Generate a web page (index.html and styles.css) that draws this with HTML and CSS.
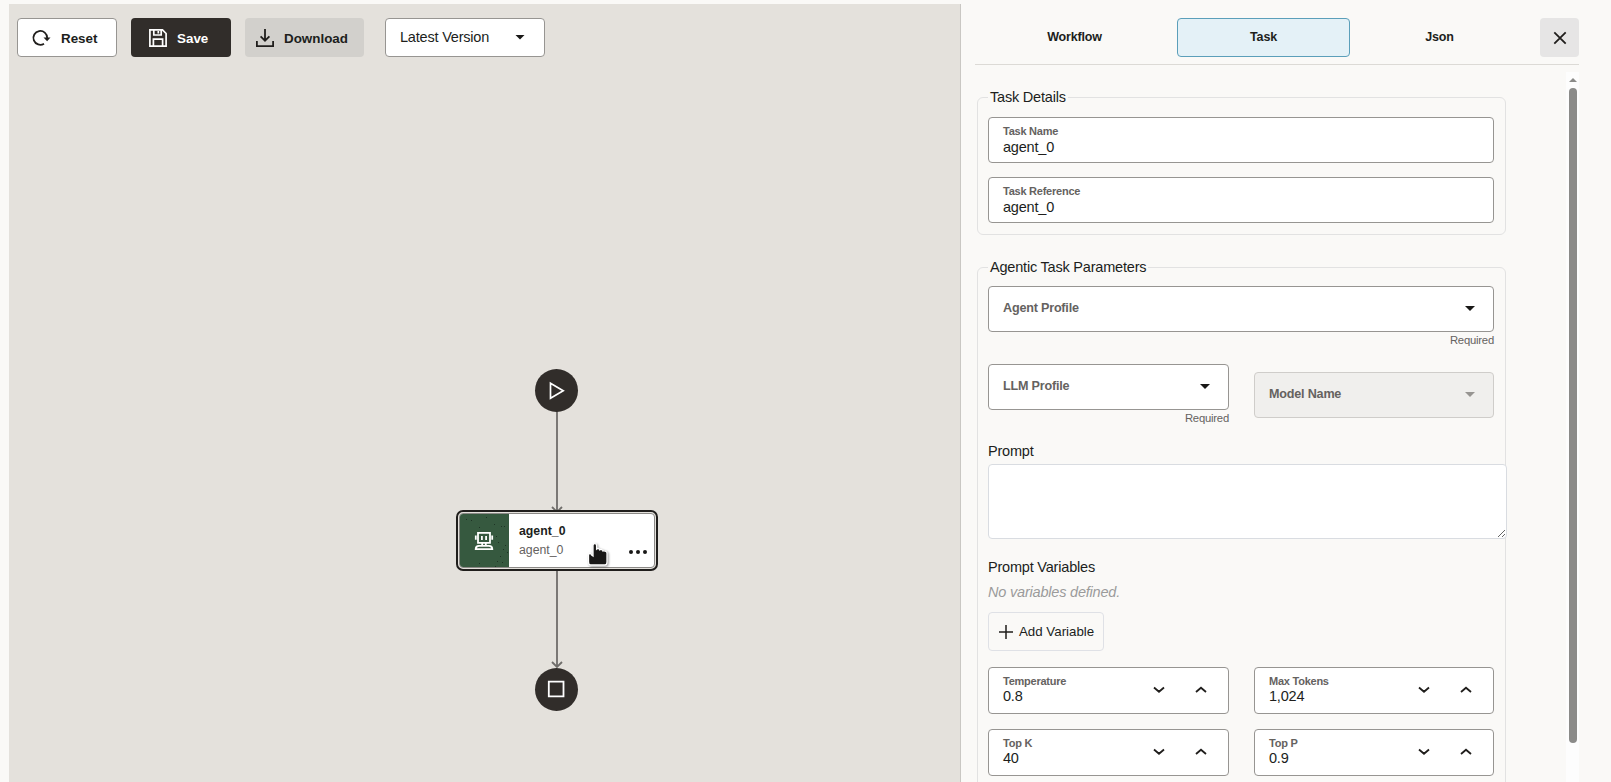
FILE: index.html
```html
<!DOCTYPE html>
<html lang="en">
<head>
    <meta charset="UTF-8">
    <meta name="viewport" content="width=device-width, initial-scale=1.0">
    <title>Workflow Editor</title>
    <link rel="stylesheet" href="styles.css">
</head>
<body>
    <div class="app">
        <main class="canvas">
            <div class="toolbar">
                <button class="btn btn-reset">
                    <svg width="20" height="20" viewBox="0 0 20 20" fill="none" stroke="#201e1c" stroke-width="1.8"><path d="M13 15.7A6.9 6.9 0 1 1 16.2 10"/><path d="M12.5 9.5h7L16.1 13.2z" fill="#201e1c" stroke="none"/></svg>
                    <b>Reset</b>
                </button>
                <button class="btn btn-save">
                    <svg width="20" height="20" viewBox="0 0 20 20" fill="none" stroke="#fff" stroke-width="1.7"><path d="M1.9 1.9h12.6l3.6 3.6v12.6H1.9z"/><path d="M5.4 18v-6.8h9.2V18M5.8 2v5h7.4V2M10.3 3v2.6"/></svg>
                    <b>Save</b>
                </button>
                <button class="btn btn-download">
                    <svg width="20" height="20" viewBox="0 0 20 20" fill="none" stroke="#201e1c" stroke-width="1.8"><path d="M10 1v11.5M5.6 8.3L10 12.7l4.4-4.4M1.9 13v5.1h16.2V13"/></svg>
                    <b>Download</b>
                </button>
                <div class="version-select">Latest Version <span class="caret"></span></div>
            </div>

            <svg class="edges" width="952" height="778" fill="none" stroke="#6f6d6a" stroke-width="1.8">
                <path d="M548 407V508M543 503l5 5 5-5"/>
                <path d="M548 564v99M543 658l5 5 5-5"/>
            </svg>
            <div class="terminal start">
                <svg width="42" height="42" viewBox="0 0 42 42" fill="none" stroke="#fff" stroke-width="1.7"><path d="M15.5 14.3v14.9L28.2 21.8z"/></svg>
            </div>
            <div class="node">
                <div class="node-body">
                    <div class="node-icon">
                        <svg class="grain" width="49" height="55" fill="#1e3325"><path d="M6 5h1v1H6zM26 3h1v1h-1zM34 10h1v1h-1zM41 12h1v1h-1zM44 12h1v1h-1zM38 28h1v1h-1zM43 35h1v1h-1zM40 42h1v1h-1zM37 47h1v1h-1zM47 38h1v1h-1zM35 52h1v1h-1zM42 48h1v1h-1zM19 49h1v1h-1zM19 13h1v1h-1zM11 6h1v1h-1zM45 31h1v1h-1zM36 22h1v1h-1z"/></svg>
                        <svg width="20" height="20" viewBox="0 0 20 20" fill="none" stroke="#fff" stroke-width="1.8"><path d="M4 1.8h12v10H4zM1.8 4.5v4.2M18.2 4.5v4.2M8.2 11.8v3M11.8 11.8v3M1.7 18.2c0-2.2 1-3.4 3.2-3.4h10.2c2.2 0 3.2 1.2 3.2 3.4z"/><path d="M7.9 4.9v4M12.1 4.9v4"/></svg>
                    </div>
                    <div class="node-text">
                        <div class="node-name">agent_0</div>
                        <div class="node-ref">agent_0</div>
                    </div>
                    <div class="node-menu"><i></i><i></i><i></i></div>
                </div>
            </div>
            <div class="terminal end">
                <svg width="42" height="42" viewBox="0 0 42 42" fill="none" stroke="#fff" stroke-width="1.8"><path d="M13.8 13.6h14.7v14.7H13.8z"/></svg>
            </div>
            <svg class="pointer" width="26" height="28" viewBox="0 0 26 28"><path d="M7 4.5c0-2.4 3.6-2.4 3.6 0V8c.8-.8 3-.6 3.2.8.8-.6 3-.2 3.2 1.2.8-.4 4 0 4 2V21c0 2-1 3-2 3H4.500c-1 0-2-1-2-3v-7c0-2 3-2 3 0l1.500 1z" fill="#191817" stroke="#fff" stroke-width="1.300"/></svg>
        </main>

        <aside class="panel">
            <div class="tabs">
                <button class="tab">Workflow</button>
                <button class="tab active">Task</button>
                <button class="tab">Json</button>
                <button class="close" aria-label="Close">
                    <svg width="14" height="14" viewBox="0 0 14 14" fill="none" stroke="#201e1c" stroke-width="1.8"><path d="M1.300 1.300l11.400 11.400M12.700 1.300L1.300 12.700"/></svg>
                </button>
            </div>
            <div class="panel-content">
                <div class="form">
                    <fieldset class="group">
                        <legend>Task Details</legend>
                        <div class="field">
                            <div class="field-text"><label>Task Name</label><span>agent_0</span></div>
                        </div>
                        <div class="field">
                            <div class="field-text"><label>Task Reference</label><span>agent_0</span></div>
                        </div>
                    </fieldset>

                    <fieldset class="group params">
                        <legend>Agentic Task Parameters</legend>
                        <div class="field select">Agent Profile <span class="caret"></span></div>
                        <div class="hint">Required</div>
                        <div class="row profile-row">
                            <div>
                                <div class="field select">LLM Profile <span class="caret"></span></div>
                                <div class="hint">Required</div>
                            </div>
                            <div class="field select disabled">Model Name <span class="caret"></span></div>
                        </div>
                        <div class="title">Prompt</div>
                        <textarea class="prompt"></textarea>
                        <div class="title variables">Prompt Variables</div>
                        <div class="empty">No variables defined.</div>
                        <button class="add-variable">
                            <svg width="14" height="14" viewBox="0 0 14 14" fill="none" stroke="#201e1c" stroke-width="1.5"><path d="M7 0v14M0 7h14"/></svg>
                            Add Variable
                        </button>
                        <div class="row numbers">
                            <div class="field">
                                <div class="field-text"><label>Temperature</label><span>0.8</span></div>
                                <svg class="steps" width="54" height="8" viewBox="0 0 54 8"><path d="M1 1.5l5 4.3 5-4.3M43 6l5-4.3L53 6"/></svg>
                            </div>
                            <div class="field">
                                <div class="field-text"><label>Max Tokens</label><span>1,024</span></div>
                                <svg class="steps" width="54" height="8" viewBox="0 0 54 8"><path d="M1 1.5l5 4.3 5-4.3M43 6l5-4.3L53 6"/></svg>
                            </div>
                            <div class="field">
                                <div class="field-text"><label>Top K</label><span>40</span></div>
                                <svg class="steps" width="54" height="8" viewBox="0 0 54 8"><path d="M1 1.5l5 4.3 5-4.3M43 6l5-4.3L53 6"/></svg>
                            </div>
                            <div class="field">
                                <div class="field-text"><label>Top P</label><span>0.9</span></div>
                                <svg class="steps" width="54" height="8" viewBox="0 0 54 8"><path d="M1 1.5l5 4.3 5-4.3M43 6l5-4.3L53 6"/></svg>
                            </div>
                        </div>
                    </fieldset>
                </div>
                <div class="scrollbar">
                    <div class="scroll-up"></div>
                    <div class="scroll-thumb"></div>
                </div>
            </div>
        </aside>
    </div>
</body>
</html>
```
FILE: styles.css
```css
* {
    box-sizing: border-box;
}
body {
    margin: 0;
    height: 782px;
    overflow: hidden;
    background-color: #faf9f7;
    color: #201e1c;
    font-family: "Liberation Sans", Arial, sans-serif;
    font-size: 14.5px;
    letter-spacing: -0.2px;
}
button {
    font-family: inherit;
    color: inherit;
    cursor: pointer;
}
svg {
    flex: none;
    display: block;
}
.app {
    display: flex;
    height: 782px;
    padding: 4px 0 0 9px;
}

/* canvas */
.canvas {
    position: relative;
    width: 952px;
    height: 778px;
    background-color: #e4e1dc;
    border-right: 1px solid #c9c7c3;
}
.toolbar {
    display: flex;
    padding: 14px 0 0 8px;
}
.btn {
    display: flex;
    align-items: center;
    height: 39px;
    padding: 0 0 0 13px;
    gap: 10px;
    border: 1px solid transparent;
    border-radius: 4px;
    font-size: 13.4px;
}
.btn b {
    padding-top: 2px;
}
.btn-reset {
    width: 100px;
    background-color: #fff;
    border-color: #979592;
}
.btn-save {
    width: 100px;
    margin-left: 14px;
    padding-left: 16px;
    gap: 9px;
    background-color: #312d2a;
    color: #fff;
}
.btn-download {
    width: 119px;
    margin-left: 14px;
    padding-left: 9px;
    gap: 9px;
    background-color: #d2d0cc;
}
.version-select {
    display: flex;
    align-items: center;
    justify-content: space-between;
    width: 160px;
    height: 39px;
    margin-left: 21px;
    padding: 0 19px 2px 14px;
    background-color: #fff;
    border: 1px solid #979592;
    border-radius: 4px;
}
.caret {
    width: 10px;
    height: 5px;
    margin-top: 1px;
    background-color: #191817;
    clip-path: polygon(0 0, 100% 0, 50% 100%);
}
.edges {
    position: absolute;
    left: 0;
    top: 0;
}
.terminal {
    position: absolute;
    left: 526px;
    width: 43px;
    height: 43px;
    border-radius: 50%;
    background-color: #312d2a;
}
.start {
    top: 365px;
}
.end {
    top: 664px;
}
.node {
    position: absolute;
    left: 447px;
    top: 506px;
    width: 202px;
    height: 61px;
    padding: 1px;
    border: 2px solid #201e1c;
    border-radius: 7px;
    background-color: #e4e1dc;
}
.node-body {
    display: flex;
    height: 55px;
    background-color: #fff;
    border: 1px solid #8b8986;
    border-radius: 4px;
    overflow: hidden;
}
.node-icon {
    position: relative;
    display: flex;
    align-items: center;
    justify-content: center;
    width: 49px;
    padding-right: 1px;
    background-color: #36593f;
}
.grain {
    position: absolute;
    left: 0;
    top: 0;
}
.node-text {
    width: 107px;
    padding: 8px 0 0 10px;
    font-size: 12.3px;
    letter-spacing: 0;
    line-height: 18.5px;
}
.node-name {
    font-weight: bold;
}
.node-ref {
    color: #65625f;
}
.node-menu {
    display: flex;
    gap: 3px;
    padding: 36px 0 0 13px;
}
.node-menu i {
    width: 4px;
    height: 4px;
    border-radius: 50%;
    background-color: #191817;
}
.pointer {
    position: absolute;
    left: 577px;
    top: 537px;
    filter: drop-shadow(1px 1px 1px rgba(0, 0, 0, 0.4));
}

/* side panel */
.panel {
    width: 618px;
    height: 778px;
    padding: 14px 0 0 14px;
}
.tabs {
    display: flex;
    width: 604px;
    height: 47px;
    border-bottom: 1px solid #dcdad6;
}
.tab {
    width: 173px;
    height: 39px;
    padding: 0 0 1px;
    border: 1px solid transparent;
    border-radius: 4px;
    background: none;
    font-size: 12.5px;
    font-weight: bold;
    letter-spacing: -0.18px;
}
.tab:first-child {
    margin: 0 16px 0 13px;
}
.tab.active {
    margin-right: 3px;
    background-color: #e4f1f7;
    border-color: #5b9fba;
}
.close {
    display: flex;
    align-items: center;
    justify-content: center;
    width: 39px;
    height: 39px;
    margin-left: auto;
    padding: 0;
    border: none;
    border-radius: 4px;
    background-color: #e6e5e5;
}
.panel-content {
    display: flex;
    justify-content: space-between;
    width: 604px;
    height: 710px;
    margin-top: 7px;
    overflow: hidden;
}
.form {
    width: 533px;
    padding: 16px 0 0 2px;
}
.group {
    width: 529px;
    min-width: 0;
    height: 147px;
    margin: 0 0 23px;
    padding: 11px 11px 0 10px;
    border: 1px solid #e2e2e2;
    border-radius: 6px;
}
.group legend {
    height: 18px;
    padding: 0 2px;
    line-height: 18px;
}
.params {
    height: 700px;
    padding-top: 10px;
}
.field {
    display: flex;
    justify-content: space-between;
    height: 46px;
    margin-bottom: 14px;
    padding: 0 15px 0 14px;
    border: 1px solid #979592;
    border-radius: 4px;
    background-color: #fff;
}
.field-text {
    display: flex;
    flex-direction: column;
    padding-top: 7px;
}
.field label {
    color: #65625f;
    font-size: 11px;
    font-weight: bold;
    letter-spacing: -0.24px;
    line-height: 13px;
}
.field-text span {
    line-height: 18px;
}
.select {
    align-items: center;
    margin-bottom: 0;
    padding-right: 18px;
    padding-bottom: 2px;
    color: #65625f;
    font-size: 12.6px;
    font-weight: bold;
    letter-spacing: -0.2px;
}
.disabled {
    margin-top: 8px;
    border-color: #cfcdca;
    background-color: #f0efed;
}
.disabled .caret {
    background-color: #979592;
}
.hint {
    height: 18px;
    color: #65625f;
    font-size: 11.3px;
    letter-spacing: -0.22px;
    line-height: 17px;
    text-align: right;
}
.row {
    display: grid;
    grid-template-columns: 241px 240px;
    column-gap: 25px;
}
.profile-row {
    margin-top: 14px;
}
.title {
    margin-top: 14px;
    line-height: 18px;
}
.prompt {
    display: block;
    width: 519px;
    height: 75px;
    margin-top: 4px;
    border: 1px solid #d9dce1;
    border-radius: 4px;
    background-color: #fff;
}
.variables {
    margin-top: 19px;
}
.empty {
    margin-top: 7px;
    color: #9b9b9b;
    font-style: italic;
    line-height: 18px;
}
.add-variable {
    display: flex;
    align-items: center;
    gap: 6px;
    width: 116px;
    height: 39px;
    margin-top: 11px;
    padding: 0 0 0 10px;
    border: 1px solid #dfe1e6;
    border-radius: 4px;
    background: none;
    font-size: 13.3px;
}
.numbers {
    margin-top: 16px;
}
.numbers .field {
    height: 47px;
    margin-bottom: 15px;
    padding-right: 21px;
}
.numbers .field-text span {
    line-height: 16px;
}
.steps {
    margin-top: 18px;
    fill: none;
    stroke: #201e1c;
    stroke-width: 1.8;
}
.scrollbar {
    display: flex;
    flex-direction: column;
    align-items: center;
    width: 13px;
    padding-top: 6px;
    background-color: #fdfdfd;
}
.scroll-up {
    border-left: 4px solid transparent;
    border-right: 4px solid transparent;
    border-bottom: 4px solid #8b8b89;
}
.scroll-thumb {
    width: 8px;
    height: 655px;
    margin-top: 6px;
    border-radius: 4px;
    background-color: #8b8b89;
}
```
